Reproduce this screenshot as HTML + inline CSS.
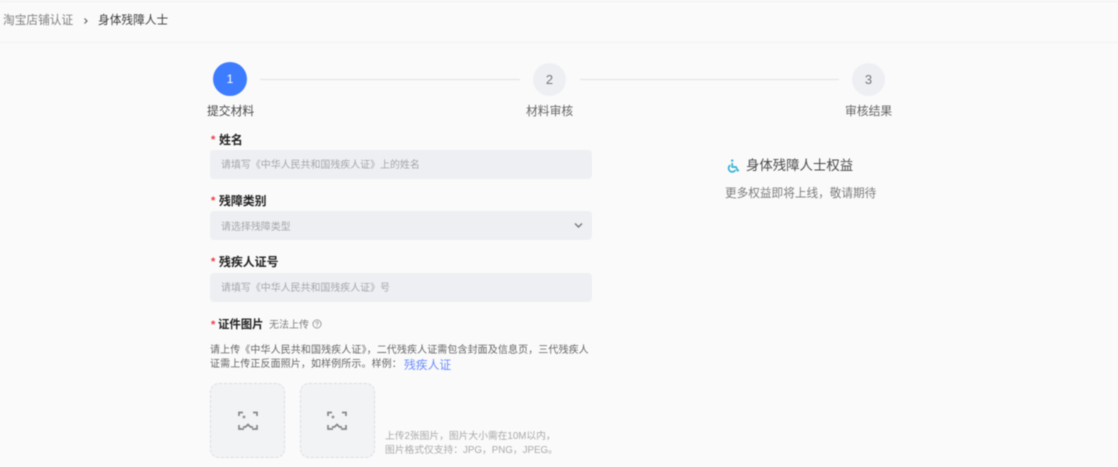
<!DOCTYPE html>
<html lang="zh-CN">
<head>
<meta charset="utf-8">
<title>身体残障人士</title>
<style>
html,body{margin:0;padding:0}
body{width:1118px;height:467px;overflow:hidden;background:#fafafa;position:relative;font-family:"Liberation Sans","Noto Sans CJK SC",sans-serif;color:#333}
#w{position:absolute;left:0;top:0;width:1118px;height:467px;filter:blur(.6px)}
.a{position:absolute;white-space:nowrap}
.line{position:absolute;height:1px;background:#e1e2e8}
.circ{position:absolute;border-radius:50%;text-align:center;background:#eeeff3;color:#777;font-size:13px;width:33px;height:33px;line-height:33px;top:63px}
.lab{font-size:11.8px;color:#666;top:103px;line-height:17px}
.req{font-size:11.9px;font-weight:700;color:#222;line-height:16px}
.star{color:#f5333f;font-size:11px;font-weight:700;line-height:16px}
.inp{position:absolute;left:210px;width:382px;background:#eeeff3;border-radius:4px}
.ph{font-size:9.95px;color:#a5a6ab;left:221px;line-height:14px}
.box{position:absolute;top:383px;width:73px;height:73px;background:#f2f3f5;border:1px dashed #dcdde1;border-radius:9px}
.txt{font-size:9.98px;color:#666;left:210px;line-height:14px;letter-spacing:.13px}
.hint{font-size:9.75px;color:#aaa;left:385px;line-height:14px}
</style>
</head>
<body>
<div id="w">
<div class="line" style="left:0;top:1px;width:1118px;background:#f0f0f0"></div>
<div class="line" style="left:0;top:42px;width:1118px;background:#f1f1f1"></div>
<div class="a" style="left:3px;top:13px;font-size:11.7px;line-height:16px;color:#808080">淘宝店铺认证</div>
<svg class="a" style="left:83px;top:17px" width="6" height="8" viewBox="0 0 6 8"><path d="M1.5 1.5 L4 4 L1.5 6.5" fill="none" stroke="#666" stroke-width="1.2"/></svg>
<div class="a" style="left:98px;top:13px;font-size:11.7px;line-height:16px;color:#3c3c3c">身体残障人士</div>

<div class="circ" style="left:213px;top:62px;width:34px;height:34px;line-height:34px;background:#3e7cff;color:#fff;font-size:12px">1</div>
<div class="line" style="left:260px;top:79px;width:260px"></div>
<div class="circ" style="left:533px">2</div>
<div class="line" style="left:580px;top:79px;width:259px"></div>
<div class="circ" style="left:852px">3</div>
<div class="a lab" style="left:207px;color:#4a4a4a">提交材料</div>
<div class="a lab" style="left:526px">材料审核</div>
<div class="a lab" style="left:845px">审核结果</div>

<div class="a star" style="left:211px;top:132px">*</div>
<div class="a req" style="left:219px;top:132px">姓名</div>
<div class="inp" style="top:150px;height:29px"></div>
<div class="a ph" style="top:159px">请填写《中华人民共和国残疾人证》上的姓名</div>

<div class="a star" style="left:211px;top:193px">*</div>
<div class="a req" style="left:219px;top:193px">残障类别</div>
<div class="inp" style="top:211px;height:29px"></div>
<div class="a ph" style="top:221px">请选择残障类型</div>
<svg class="a" style="left:574px;top:222px" width="9" height="7" viewBox="0 0 9 7"><path d="M1 1.5 L4.5 5 L8 1.5" fill="none" stroke="#777" stroke-width="1.4"/></svg>

<div class="a star" style="left:211px;top:254px">*</div>
<div class="a req" style="left:219px;top:254px">残疾人证号</div>
<div class="inp" style="top:273px;height:29px"></div>
<div class="a ph" style="top:282px">请填写《中华人民共和国残疾人证》号</div>

<div class="a star" style="left:211px;top:317px">*</div>
<div class="a req" style="left:218px;top:317px;font-size:11.4px">证件图片</div>
<div class="a" style="left:269px;top:319px;font-size:10px;line-height:14px;color:#808080">无法上传</div>
<svg class="a" style="left:312px;top:319px" width="10" height="10" viewBox="0 0 10 10"><circle cx="5" cy="5" r="4.1" fill="none" stroke="#888" stroke-width=".8"/><path d="M3.6 4 Q3.8 2.7 5 2.7 Q6.4 2.7 6.3 3.9 Q6.2 4.6 5 5.2 V6" fill="none" stroke="#888" stroke-width=".7"/><circle cx="5" cy="7.2" r=".45" fill="#888"/></svg>

<div class="a txt" style="top:344px">请上传《中华人民共和国残疾人证》，二代残疾人证需包含封面及信息页，三代残疾人</div>
<div class="a txt" style="top:358px">证需上传正反面照片，如样例所示。样例：</div>
<div class="a" style="left:404px;top:357px;font-size:11.8px;line-height:16px;color:#6b8dff">残疾人证</div>

<div class="box" style="left:210px"></div>
<div class="box" style="left:300px"></div>
<svg class="a" style="left:238px;top:411px" width="20" height="20" viewBox="0 0 20 20" fill="none" stroke="#85868b" stroke-width="1.7"><path d="M1 5 V1.5 H5 M15 1.5 H19 V5 M1 14 V18 H6 M14 18 H19 V14 M5 16 H7.5 L10 13.5 L12.5 16 H15"/><circle cx="6" cy="6" r=".5"/></svg>
<svg class="a" style="left:327px;top:411px" width="20" height="20" viewBox="0 0 20 20" fill="none" stroke="#85868b" stroke-width="1.7"><path d="M1 5 V1.5 H5 M15 1.5 H19 V5 M1 14 V18 H6 M14 18 H19 V14 M5 16 H7.5 L10 13.5 L12.5 16 H15"/><circle cx="6" cy="6" r=".5"/></svg>

<div class="a hint" style="top:430px">上传2张图片，图片大小需在10M以内，</div>
<div class="a hint" style="top:444px">图片格式仅支持：JPG，PNG，JPEG。</div>

<svg class="a" style="left:727px;top:159px" width="13" height="14" viewBox="0 0 13 14" fill="none" stroke="#35b3d3" stroke-width="1.7"><circle cx="5.2" cy="1.6" r="1.2" fill="#35b3d3" stroke="none"/><path d="M5.2 4 V8 H9 L10.6 11.6 L12 11"/><path d="M3.4 6.2 A3.6 3.6 0 1 0 8.4 11"/></svg>
<div class="a" style="left:746px;top:156px;font-size:13.4px;line-height:19px;color:#4a4a4a">身体残障人士权益</div>
<div class="a" style="left:725px;top:186px;font-size:11.65px;line-height:16px;color:#7c7c7c">更多权益即将上线，敬请期待</div>
</div>
</body>
</html>
